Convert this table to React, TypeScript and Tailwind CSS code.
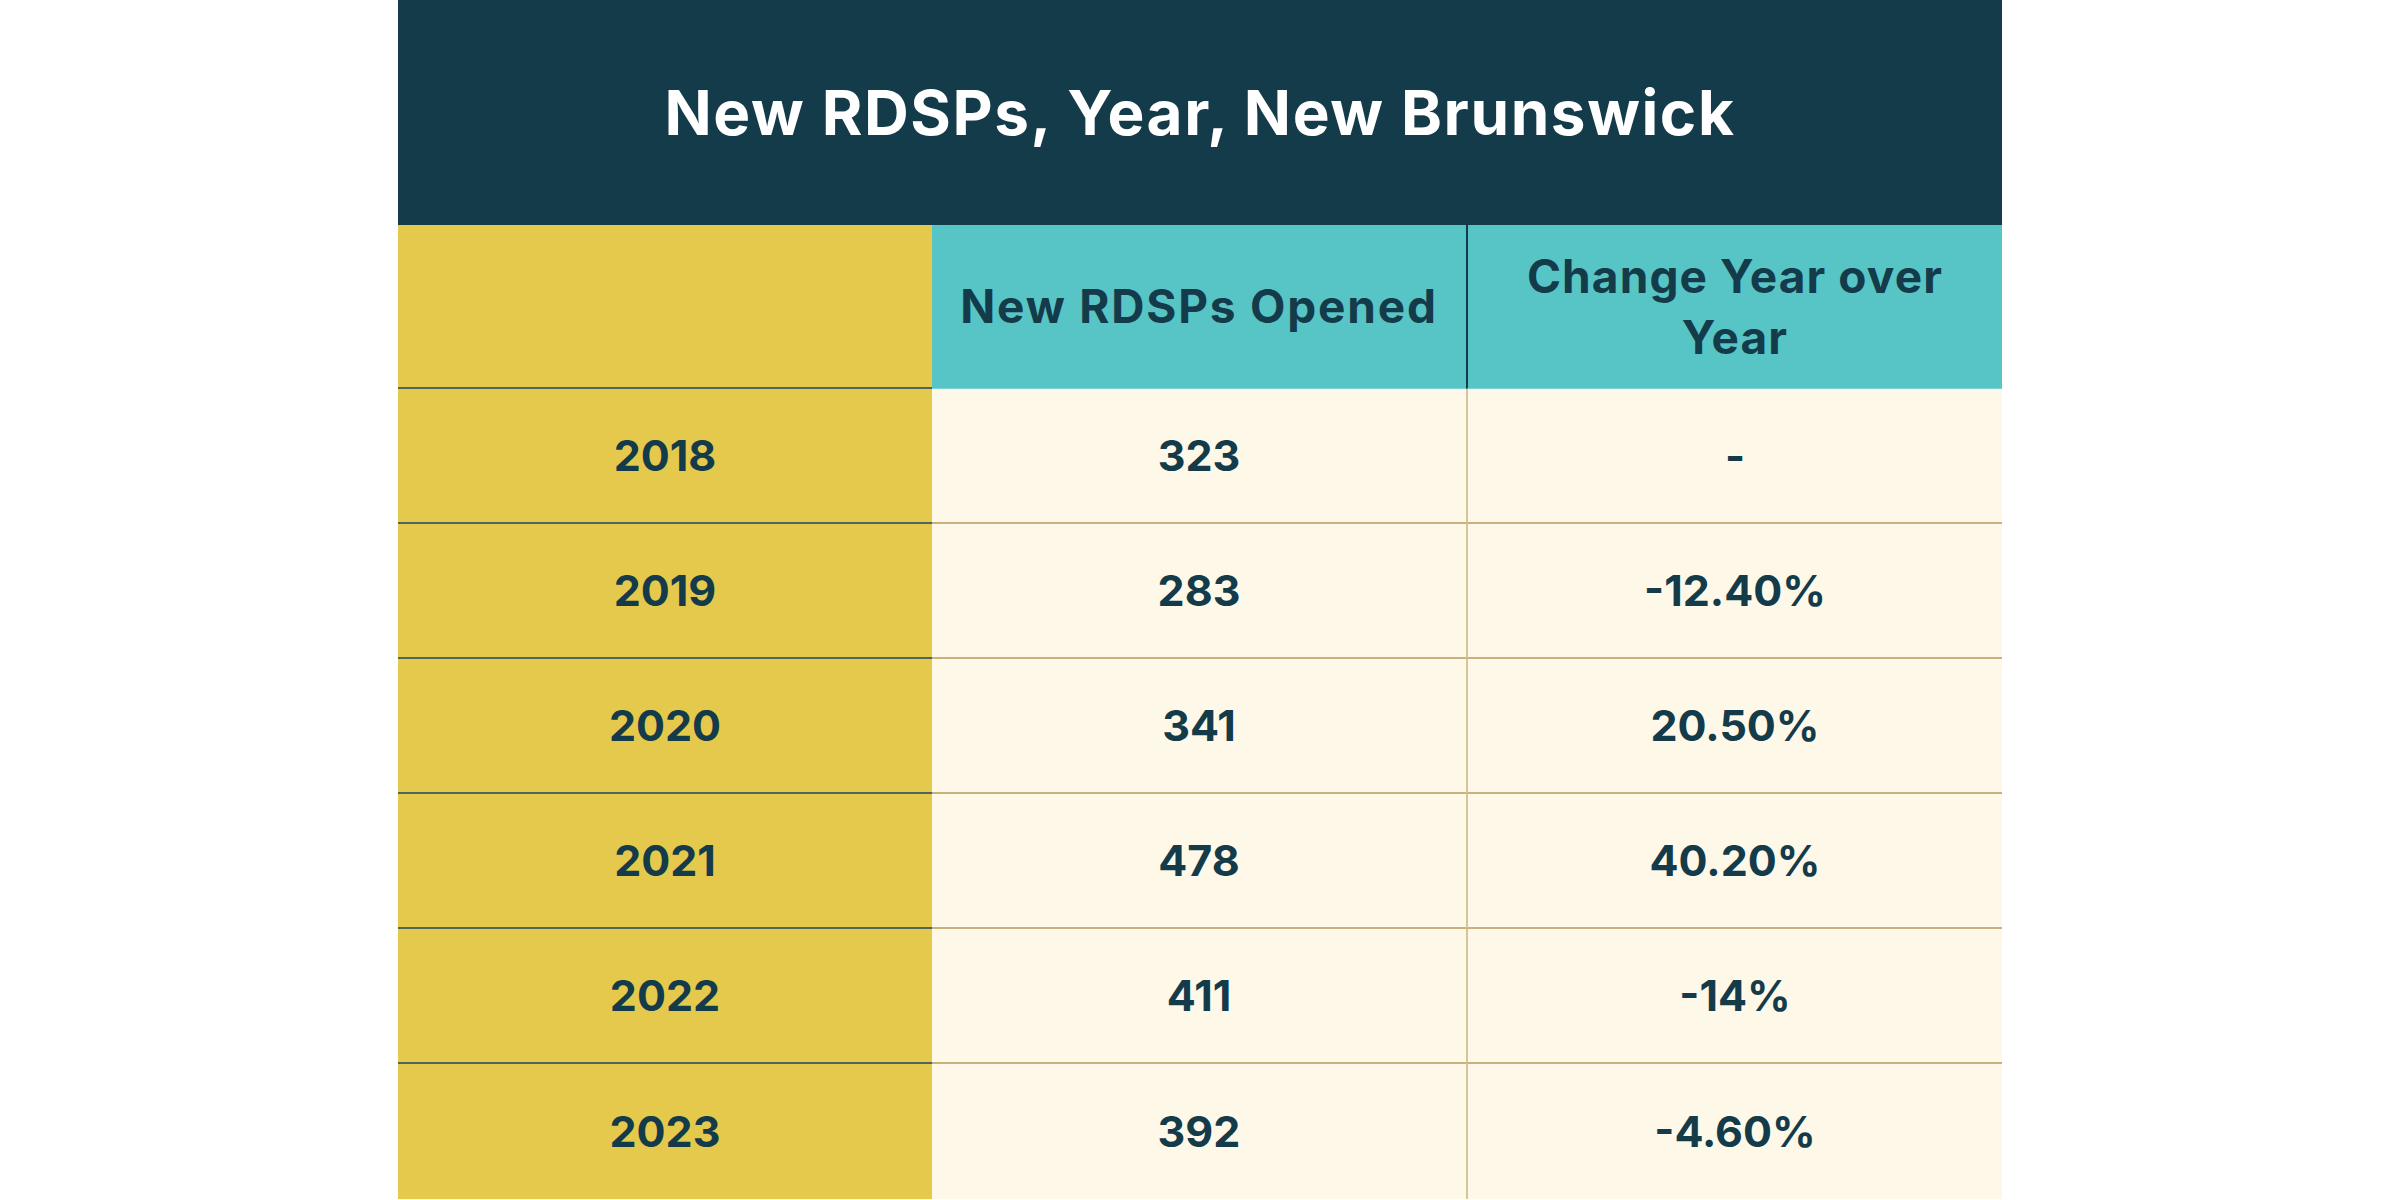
import React from 'react';

const ROWS: { year: string; opened: string; change: string }[] = [
  { year: '2018', opened: '323', change: '-' },
  { year: '2019', opened: '283', change: '-12.40%' },
  { year: '2020', opened: '341', change: '20.50%' },
  { year: '2021', opened: '478', change: '40.20%' },
  { year: '2022', opened: '411', change: '-14%' },
  { year: '2023', opened: '392', change: '-4.60%' },
];

export default function App() {
  return (
    <div className="min-h-screen w-full bg-white font-['Inter','Liberation_Sans',Arial,sans-serif] text-[#143b4a]">
      <div className="mx-auto w-[1604px]">
        {/* title bar */}
        <div className="flex h-[225px] items-center justify-center bg-[#143b4a]">
          <h1 className="text-[62px] font-bold leading-none tracking-[1.6px] text-white">
            New RDSPs, Year, New Brunswick
          </h1>
        </div>

        {/* column headers */}
        <div className="grid h-[164px] grid-cols-[534px_534px_536px]">
          <div className="border-b-2 border-[#4f6660] bg-[#e5c94d]" />
          <div className="flex items-center justify-center border-b border-[#7fd2d2] bg-[#57c4c5] text-[46px] font-bold leading-[61px] tracking-[1.8px] whitespace-nowrap">
            New RDSPs Opened
          </div>
          <div className="flex items-center justify-center border-b border-l-2 border-b-[#7fd2d2] border-l-[#143b4a] bg-[#57c4c5] text-center text-[46px] font-bold leading-[61px] tracking-[1.1px]">
            <span>
              Change Year over
              <br />
              Year
            </span>
          </div>
        </div>

        {/* body */}
        {ROWS.map((row, i) => {
          const last = i === ROWS.length - 1;
          return (
            <div key={row.year} className="grid h-[135px] grid-cols-[534px_534px_536px] text-[43px] font-bold leading-none">
              <div className={`flex items-center justify-center bg-[#e5c94d] ${last ? '' : 'border-b-2 border-[#4f6660]'}`}>
                {row.year}
              </div>
              <div className={`flex items-center justify-center bg-[#fef8e9] ${last ? '' : 'border-b-2 border-[#c9b07f]'}`}>
                {row.opened}
              </div>
              <div className={`flex items-center justify-center border-l-2 border-l-[#d6c59c] bg-[#fef8e9] ${last ? '' : 'border-b-2 border-b-[#c9b07f]'}`}>
                {row.change}
              </div>
            </div>
          );
        })}
      </div>
    </div>
  );
}
